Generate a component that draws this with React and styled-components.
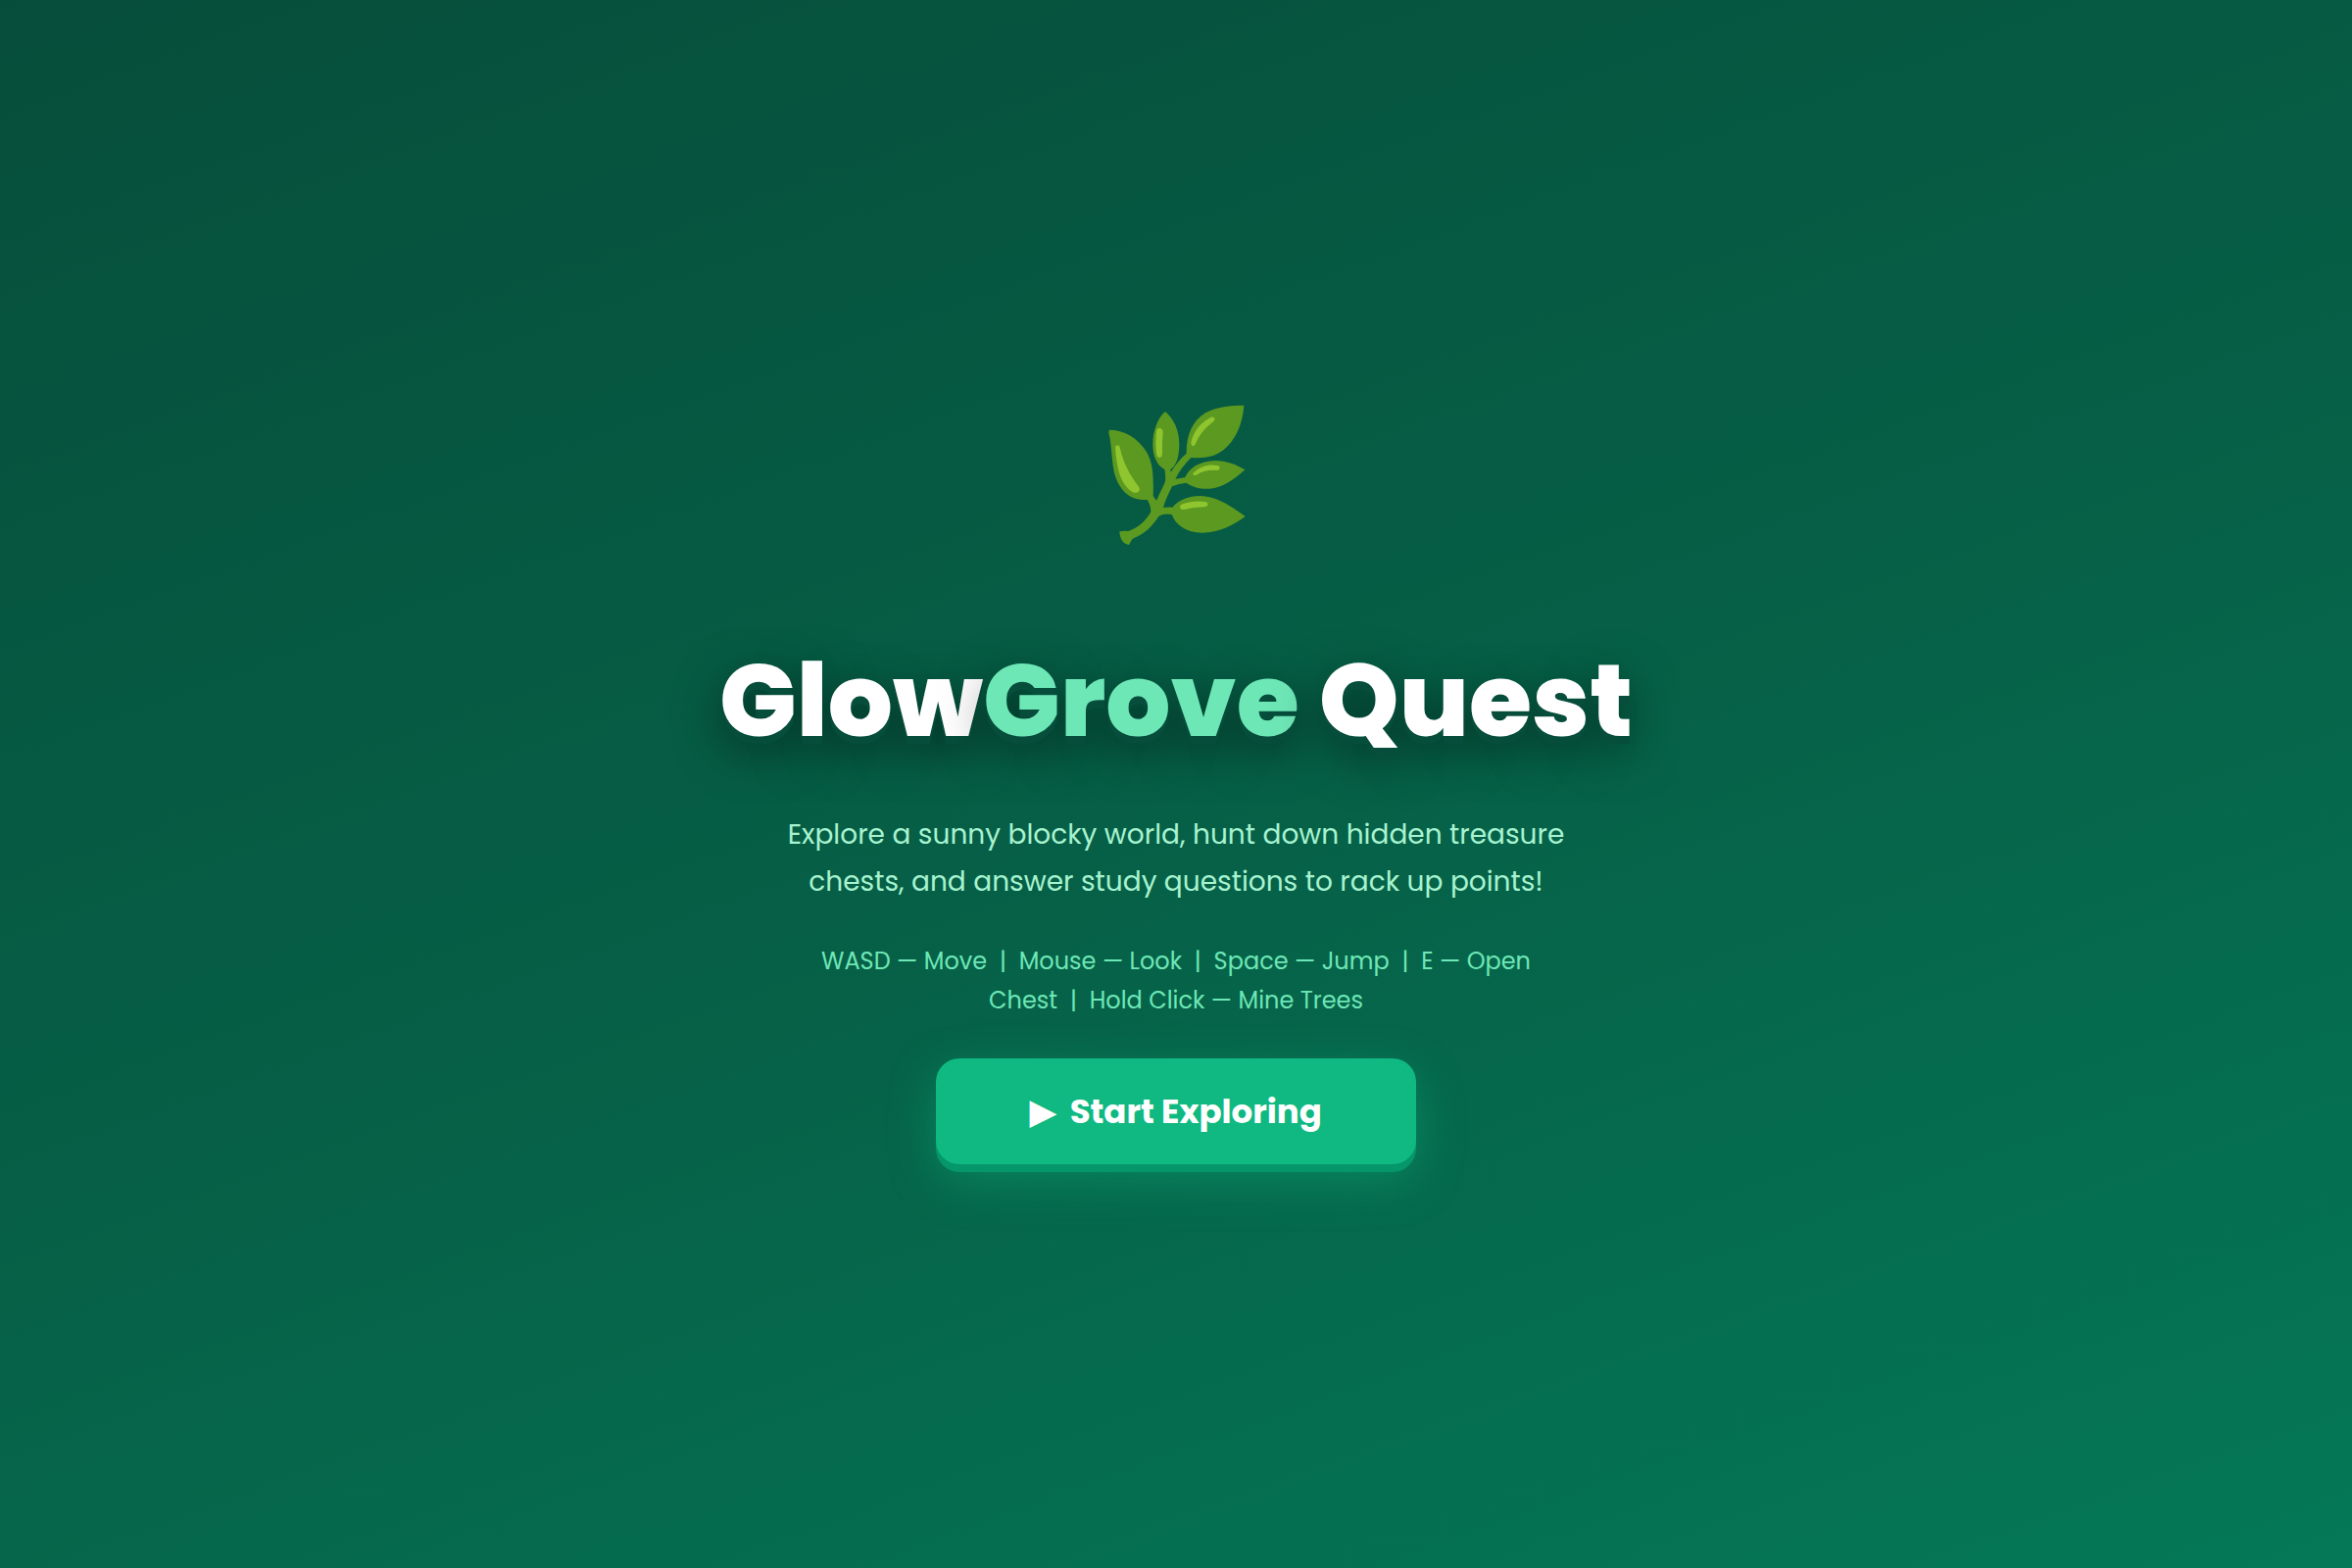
import React from 'react';
import styled, { createGlobalStyle } from 'styled-components';

const GlobalStyle = createGlobalStyle`
  * {
    box-sizing: border-box;
  }

  body {
    margin: 0;
    font-family: Poppins, sans-serif;
  }
`;

const Screen = styled.main`
  display: flex;
  flex-direction: column;
  align-items: center;
  justify-content: center;
  min-height: 100vh;
  text-align: center;
  background: linear-gradient(160deg, #064e3b 0%, #065f46 50%, #047857 100%);
`;

const Leaf = styled.svg`
  display: block;
  width: 180px;
  height: 158px;
  margin-bottom: 85px;
`;

const Title = styled.h1`
  margin: 0 0 53px;
  font-size: 104px;
  font-weight: 800;
  line-height: 120px;
  color: #fff;
  text-shadow: 0 8px 0 #064e3b, 0 16px 48px rgba(0, 0, 0, 0.5);
`;

const Accent = styled.span`
  color: #6ee7b7;
`;

const Tagline = styled.p`
  max-width: 840px;
  margin: 0 0 37px;
  font-size: 28px;
  line-height: 48px;
  color: #a7f3d0;
`;

const Controls = styled.p`
  max-width: 760px;
  margin: 0 0 39px;
  font-size: 24px;
  line-height: 40px;
  color: #6ee7b7;
`;

const StartButton = styled.button`
  height: 108px;
  padding: 0 96px;
  border: 0;
  border-radius: 24px;
  font-family: inherit;
  font-size: 34px;
  font-weight: 700;
  color: #fff;
  white-space: nowrap;
  background: #10b981;
  box-shadow: 0 8px 0 #059669, 0 16px 48px rgba(16, 185, 129, 0.4);
  cursor: pointer;
`;

const LeafIcon = () => (
  <Leaf viewBox="0 66 540 474" aria-hidden="true">
    <g fill="#5c9921">
      <path d="M66 146C110 146 154 170 180 214C198 246 202 280 200 348Q206 358 211 362C218 342 230 324 237 304Q239 284 235 267C210 253 199 226 199 190C199 148 215 108 237 90C264 112 280 149 280 190C280 226 272 256 253 267L254 275Q276 240 302 218C302 160 320 119 360 94C395 75 435 71 478 71C474 128 452 178 415 208C385 230 354 234 316 231Q284 263 268 296Q285 295 298 291C312 260 344 242 390 240C425 241 455 252 481 268C450 296 418 321 375 326C344 328 320 321 301 308Q278 310 258 319C248 340 236 363 231 384Q246 382 259 383C278 360 310 348 345 348C400 351 440 381 482 411C443 440 403 459 350 461C301 461 269 437 257 405Q235 400 217 410C199 440 174 464 137 479C133 485 130 491 126 498C111 497 98 483 97 457Q110 454 124 456C154 446 178 425 193 397Q193 376 182 360C133 363 101 336 85 290C72 253 75 198 64 154Z" />
    </g>
    <g fill="#8fc52e">
      <path d="M84 199C87 190 96 191 98 199C108 248 130 286 156 320C163 332 153 341 140 338C112 324 97 290 91 256C87 235 85 216 84 199Z" />
      <path d="M210 150C212 137 227 137 230 151Q227 186 228 222C225 234 214 235 210 220Q206 185 210 150Z" />
      <path d="M376 108C388 103 393 114 384 121C356 143 341 162 329 190C324 200 315 195 316 184C324 150 344 125 376 108Z" />
      <path d="M328 274C348 255 372 250 398 255C408 260 405 270 394 270C369 268 349 274 332 284C323 288 317 281 328 274Z" />
      <path d="M290 373C311 365 337 362 360 366C371 370 370 379 359 382Q323 383 294 390C280 391 278 378 290 373Z" />
    </g>
  </Leaf>
);

const App = () => (
  <>
    <GlobalStyle />
    <Screen>
      <LeafIcon />
      <Title>
        Glow<Accent>Grove</Accent> Quest
      </Title>
      <Tagline>
        Explore a sunny blocky world, hunt down hidden treasure
        <br />
        chests, and answer study questions to rack up points!
      </Tagline>
      <Controls>
        WASD — Move &nbsp;|&nbsp; Mouse — Look &nbsp;|&nbsp; Space — Jump &nbsp;|&nbsp; E — Open
        <br />
        Chest &nbsp;|&nbsp; Hold Click — Mine Trees
      </Controls>
      <StartButton type="button">▶&nbsp; Start Exploring</StartButton>
    </Screen>
  </>
);

export default App;
